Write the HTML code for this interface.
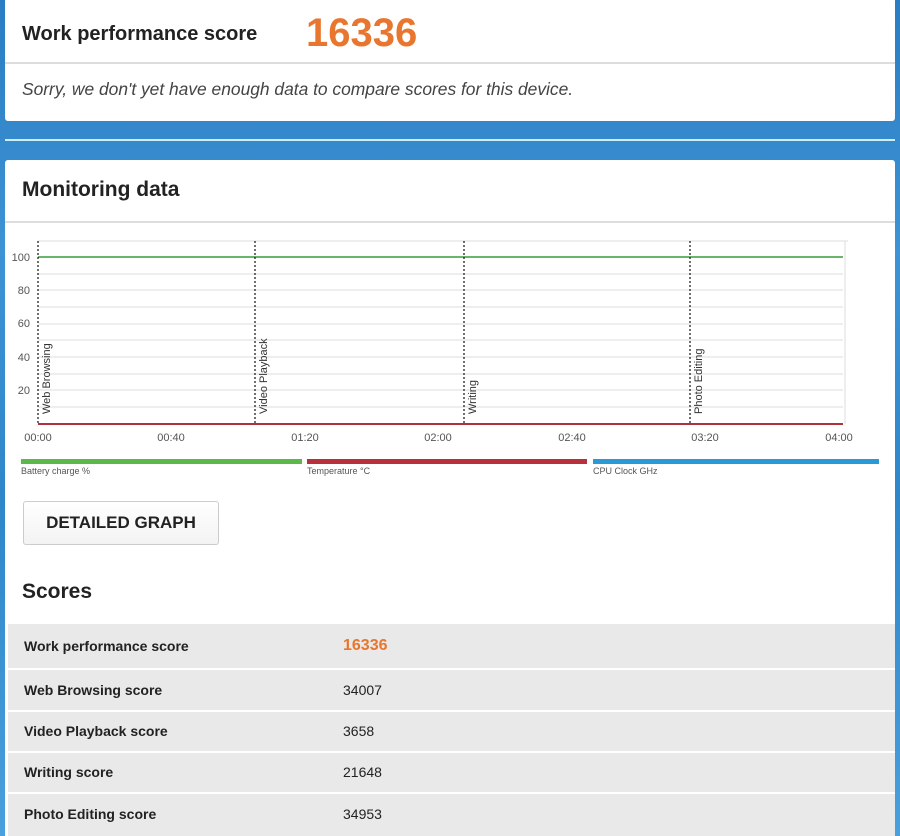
<!DOCTYPE html>
<html><head><style>
body{margin:0;width:900px;height:836px;overflow:hidden;background:linear-gradient(180deg,#2a7dc2 0%,#3d93d4 30%,#2f86c9 60%,#4aa0dc 100%);font-family:"Liberation Sans",sans-serif;position:relative}
.p{position:absolute;background:#fff;left:5px;width:890px}
.t{position:absolute;color:#222}
.row{position:absolute;left:8px;width:887px;background:#e9e9e9;font-weight:bold;font-size:14px;color:#222}
.row span{position:absolute;left:16px}
.row b{position:absolute;left:335px;font-weight:normal}
</style></head><body>
<div class="p" style="top:0;height:121px;border-radius:0 0 3px 3px">
 <div class="t" style="left:17px;top:23px;font-size:20px;font-weight:bold">Work performance score</div>
 <div class="t" style="left:301px;top:11px;font-size:40px;font-weight:bold;color:#e8762f">16336</div>
 <div style="position:absolute;left:0;right:0;top:62px;height:2px;background:#ddd"></div>
 <div class="t" style="left:17px;top:79px;font-size:17.4px;font-style:italic;color:#444">Sorry, we don't yet have enough data to compare scores for this device.</div>
</div>
<div style="position:absolute;left:5px;width:890px;top:139px;height:2px;background:#cdeefc"></div>
<div class="p" style="top:160px;height:676px;border-radius:3px 3px 0 0">
 <div class="t" style="left:17px;top:18px;font-size:21px;font-weight:bold">Monitoring data</div>
 <div style="position:absolute;left:0;right:0;top:61px;height:2px;background:#ddd"></div>
 <div class="t" style="left:18px;top:341px;width:194px;height:42px;border:1px solid #ccc;border-radius:3px;background:linear-gradient(#fff,#f3f3f3);font-size:17px;line-height:42px;text-align:center;font-weight:bold;color:#222">DETAILED GRAPH</div>
 <div class="t" style="left:17px;top:420px;font-size:21px;font-weight:bold">Scores</div>
</div>
<svg style="position:absolute;left:0;top:230px" width="900" height="250" font-family="Liberation Sans,sans-serif" font-size="11" fill="#555">
 <g stroke="#ddd" stroke-width="1">
  <line x1="38" x2="848" y1="11" y2="11"/><line x1="38" x2="843" y1="44" y2="44"/><line x1="38" x2="843" y1="60" y2="60"/><line x1="38" x2="843" y1="77" y2="77"/><line x1="38" x2="843" y1="94" y2="94"/><line x1="38" x2="843" y1="110" y2="110"/><line x1="38" x2="843" y1="127" y2="127"/><line x1="38" x2="843" y1="144" y2="144"/><line x1="38" x2="843" y1="160" y2="160"/><line x1="38" x2="843" y1="177" y2="177"/>
  <line x1="845" x2="845" y1="11" y2="194"/>
 </g>
 <line x1="38" x2="843" y1="27" y2="27" stroke="#3a9c3a" stroke-width="1.5"/>
 <line x1="38" x2="843" y1="194" y2="194" stroke="#b0303c" stroke-width="2"/>
 <g stroke="#222" stroke-width="1.3" stroke-dasharray="2,2">
  <line x1="38" x2="38" y1="11" y2="194"/><line x1="255" x2="255" y1="11" y2="194"/><line x1="464" x2="464" y1="11" y2="194"/><line x1="690" x2="690" y1="11" y2="194"/>
 </g>
 <g text-anchor="end"><text x="30" y="31">100</text><text x="30" y="64">80</text><text x="30" y="97">60</text><text x="30" y="131">40</text><text x="30" y="164">20</text></g>
 <g text-anchor="middle"><text x="38" y="211">00:00</text><text x="171" y="211">00:40</text><text x="305" y="211">01:20</text><text x="438" y="211">02:00</text><text x="572" y="211">02:40</text><text x="705" y="211">03:20</text><text x="839" y="211">04:00</text></g>
 <g font-size="11" fill="#333"><text transform="translate(50,184) rotate(-90)">Web Browsing</text><text transform="translate(267,184) rotate(-90)">Video Playback</text><text transform="translate(476,184) rotate(-90)">Writing</text><text transform="translate(702,184) rotate(-90)">Photo Editing</text></g>
 <rect x="21" y="229" width="281" height="5" fill="#5cb84a"/><rect x="307" y="229" width="280" height="5" fill="#b8303c"/><rect x="593" y="229" width="286" height="5" fill="#2a9ad6"/>
 <g font-size="9" fill="#555"><text x="21" y="244">Battery charge %</text><text x="307" y="244">Temperature °C</text><text x="593" y="244">CPU Clock GHz</text></g>
</svg>
<div class="row" style="top:624px;height:44px;line-height:44px"><span>Work performance score</span><b style="color:#e8762f;font-weight:bold;font-size:16px">16336</b></div>
<div class="row" style="top:670px;height:40px;line-height:40px"><span>Web Browsing score</span><b>34007</b></div>
<div class="row" style="top:712px;height:39px;line-height:39px"><span>Video Playback score</span><b>3658</b></div>
<div class="row" style="top:753px;height:39px;line-height:39px"><span>Writing score</span><b>21648</b></div>
<div class="row" style="top:794px;height:42px;line-height:40px"><span>Photo Editing score</span><b>34953</b></div>
</body></html>
